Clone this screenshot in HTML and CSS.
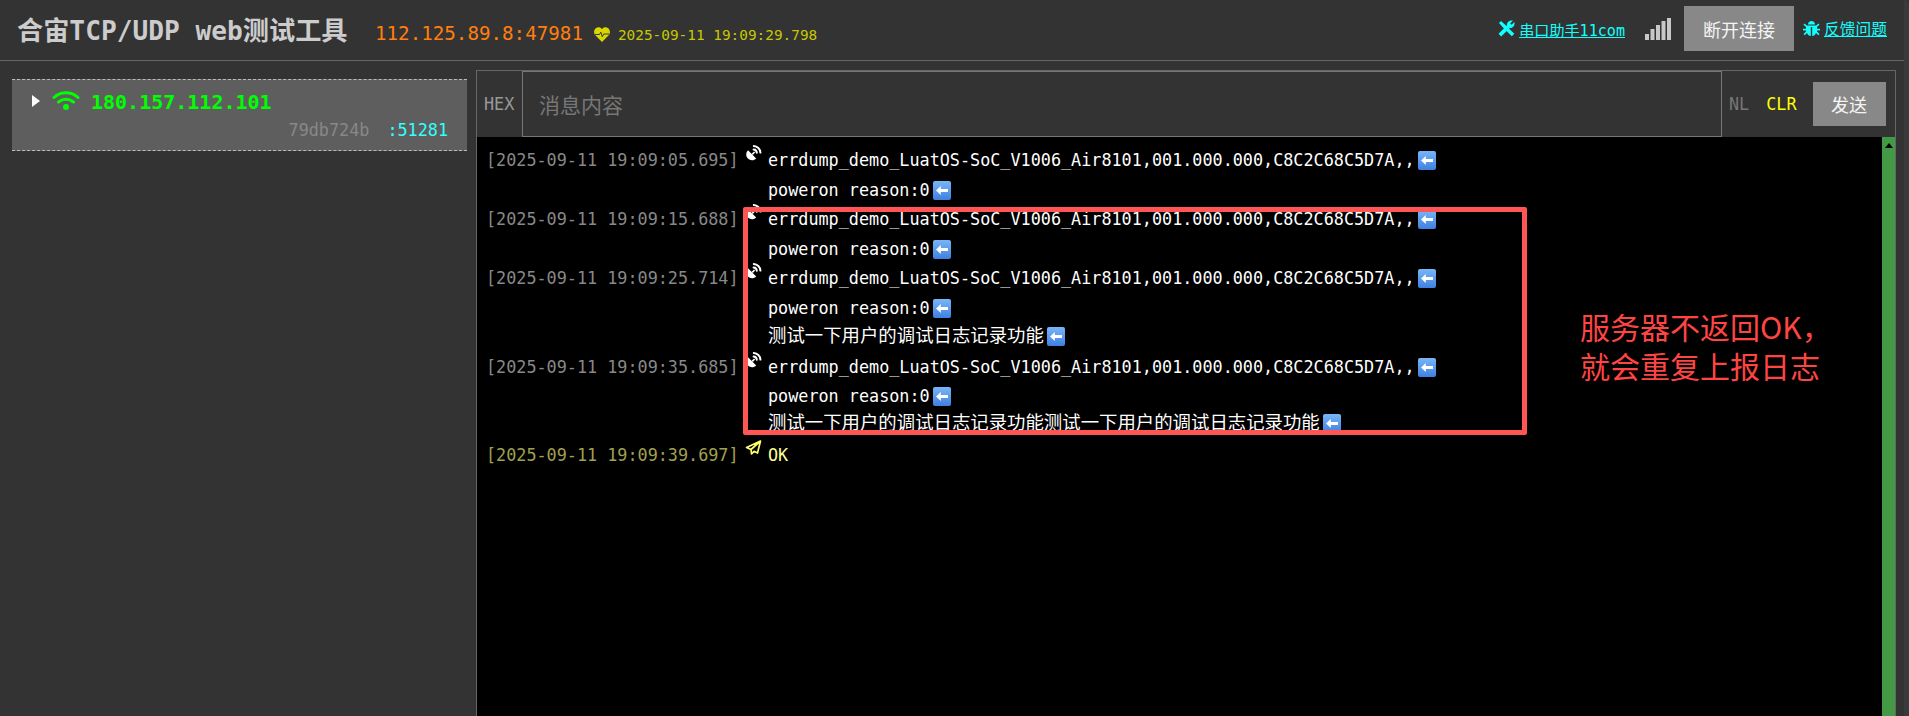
FILE: index.html
```html
<!DOCTYPE html>
<html lang="zh-CN">
<head>
<meta charset="utf-8">
<title>合宙TCP/UDP web测试工具</title>
<link rel="stylesheet" href="styles.css">
</head>
<body>
<svg class="defs" width="0" height="0" aria-hidden="true">
  <defs>
    <symbol id="dish" viewBox="0 0 17 16">
      <path d="M3 5.2 11.2 13.4C9 15.6 5.4 15.8 3 13.6.6 11.3.7 7.500 3 5.2Z" fill="currentColor"/>
      <path d="M7.200 9.400 9.600 7" stroke="currentColor" stroke-width="1.600" fill="none"/>
      <path d="M8.600 4.500C10.200 4.600 11.700 6 11.800 7.700M8.800 1C12.300 1.200 15.200 4 15.400 7.600" stroke="currentColor" stroke-width="2" fill="none" stroke-linecap="round"/>
    </symbol>
    <symbol id="back" viewBox="0 0 18 19">
      <defs>
        <linearGradient id="blue" x1="0" y1="0" x2="0" y2="1">
          <stop offset="0" stop-color="#78b6f7"/>
          <stop offset="1" stop-color="#3f80e2"/>
        </linearGradient>
      </defs>
      <rect width="18" height="19" rx="2" fill="url(#blue)"/>
      <path d="M3 9.500 7.800 5V8H15V11H7.800V14Z" fill="#fff"/>
    </symbol>
  </defs>
</svg>
<div class="app">
  <header class="topbar">
    <h1 class="title">合宙TCP/UDP web测试工具</h1>
    <span class="peer">112.125.89.8:47981</span>
    <svg class="heart" viewBox="0 0 16 15"><path d="M8 15 1.300 8.300C-.6 6.200-.2 2.800 1.800 1.300 3.900-.3 6.500.2 8 2.200 9.500.2 12.100-.3 14.200 1.300 16.200 2.800 16.600 6.200 14.700 8.300Z" fill="#d8d800"/><path d="M1 7.500H5.500L6.800 5 8.300 9.800 9.600 7H15" stroke="#3a3a3a" stroke-width="1" fill="none"/></svg>
    <span class="beat">2025-09-11 19:09:29.798</span>
    <nav class="tools">
      <svg class="tool-icon wrench" viewBox="0 0 17 17"><path d="M1 3 3 1 8.500 6 11 8.500 16.300 13.800 13.800 16.300 8.500 11 6 8.500Z" fill="currentColor"/><path d="M.5 13.800 9 5.300C8.500 2.400 11.500-.2 15 .6L12.200 3.400 13.600 4.800 16.400 2C17.200 5.500 14.500 8.500 11.700 8L3.200 16.500Z" fill="currentColor"/></svg>
      <a class="link" href="#">串口助手11com</a>
      <svg class="signal" viewBox="0 0 26 22"><rect x="0" y="16" width="4" height="6"/><rect x="5.500" y="11" width="4" height="11"/><rect x="11" y="7" width="4" height="15"/><rect x="16.500" y="3" width="4" height="19"/><rect x="22" y="0" width="4" height="22"/></svg>
      <button class="btn btn-disconnect">断开连接</button>
      <svg class="tool-icon bug" viewBox="0 0 17 17"><path d="M5 4.500C5 2.500 6.500 1 8.500 1S12 2.500 12 4.500ZM3.800 5.500H13.200L15.500 3.500 16.500 4.700 14 7V8.800H17V10.400H14V11.500L16.500 14 15.300 15.200 13 13C12.300 14.800 10.800 16 9.200 16V7H7.800V16C6.200 16 4.700 14.800 4 13L1.700 15.200.5 14 3 11.500V10.400H0V8.800H3V7L.5 4.700 1.500 3.500Z" fill="currentColor"/></svg>
      <a class="link link-wide" href="#">反馈问题</a>
    </nav>
  </header>
  <main class="workspace">
    <aside class="clients">
      <div class="client">
        <div class="client-head">
          <span class="caret"></span>
          <svg class="wifi" viewBox="0 0 28 19"><path d="M2 6.500C9 .2 19 .2 26 6.500M6.500 11C11 7.200 17 7.200 21.500 11" stroke="#0f0" stroke-width="3" fill="none" stroke-linecap="round"/><circle cx="14" cy="16" r="3" fill="#0f0"/></svg>
          <span class="client-ip">180.157.112.101</span>
        </div>
        <div class="client-meta">
          <span class="client-id">79db724b</span>
          <span class="client-port">:51281</span>
        </div>
      </div>
    </aside>
    <section class="console">
      <div class="sendbar">
        <span class="hex">HEX</span>
        <div class="msg-input">消息内容</div>
        <span class="nl">NL</span>
        <span class="clr">CLR</span>
        <button class="btn btn-send">发送</button>
      </div>
      <div class="terminal">
        <div class="log">
          <div class="row">
            <span class="time">[2025-09-11 19:09:05.695]</span>
            <svg class="kind"><use href="#dish"/></svg>
            <div class="msg">
              <div class="line">errdump_demo_LuatOS-SoC_V1006_Air8101,001.000.000,C8C2C68C5D7A,,<svg class="ret"><use href="#back"/></svg></div>
              <div class="line">poweron reason:0<svg class="ret"><use href="#back"/></svg></div>
            </div>
          </div>
          <div class="row">
            <span class="time">[2025-09-11 19:09:15.688]</span>
            <svg class="kind"><use href="#dish"/></svg>
            <div class="msg">
              <div class="line">errdump_demo_LuatOS-SoC_V1006_Air8101,001.000.000,C8C2C68C5D7A,,<svg class="ret"><use href="#back"/></svg></div>
              <div class="line">poweron reason:0<svg class="ret"><use href="#back"/></svg></div>
            </div>
          </div>
          <div class="row">
            <span class="time">[2025-09-11 19:09:25.714]</span>
            <svg class="kind"><use href="#dish"/></svg>
            <div class="msg">
              <div class="line">errdump_demo_LuatOS-SoC_V1006_Air8101,001.000.000,C8C2C68C5D7A,,<svg class="ret"><use href="#back"/></svg></div>
              <div class="line">poweron reason:0<svg class="ret"><use href="#back"/></svg></div>
              <div class="line line-cn">测试一下用户的调试日志记录功能<svg class="ret"><use href="#back"/></svg></div>
            </div>
          </div>
          <div class="row">
            <span class="time">[2025-09-11 19:09:35.685]</span>
            <svg class="kind"><use href="#dish"/></svg>
            <div class="msg">
              <div class="line">errdump_demo_LuatOS-SoC_V1006_Air8101,001.000.000,C8C2C68C5D7A,,<svg class="ret"><use href="#back"/></svg></div>
              <div class="line">poweron reason:0<svg class="ret"><use href="#back"/></svg></div>
              <div class="line line-cn line-last">测试一下用户的调试日志记录功能测试一下用户的调试日志记录功能<svg class="ret"><use href="#back"/></svg></div>
            </div>
          </div>
          <div class="row row-sent">
            <span class="time">[2025-09-11 19:09:39.697]</span>
            <svg class="kind" viewBox="0 0 17 16"><path d="M15.500 1 1.500 7.500 6 9.500 6.500 14 9 11.300 12.500 13ZM15.500 1 6 9.500" stroke="currentColor" stroke-width="1.700" fill="none" stroke-linejoin="round"/></svg>
            <div class="msg">
              <div class="line">OK</div>
            </div>
          </div>
        </div>
        <div class="scrollbar"><span class="scroll-up"></span></div>
        <div class="mark"></div>
        <div class="note">服务器不返回OK，<br>就会重复上报日志</div>
      </div>
    </section>
  </main>
  <div class="page-edge"></div>
</div>
</body>
</html>
```

FILE: styles.css
```css
* { box-sizing: border-box; }

html, body { margin: 0; height: 100%; overflow: hidden; }

body {
  background: #333;
  color: #ccc;
  font-family: "DejaVu Sans Mono", "Noto Sans CJK SC", monospace;
  font-size: 16.8px;
}

.defs { position: absolute; }

.app {
  display: grid;
  grid-template-columns: 1904px 5px;
  grid-template-rows: 61px 655px;
  height: 716px;
}

.topbar {
  grid-column: 1;
  display: flex;
  align-items: center;
  padding: 0 17px 3px 17px;
  border-bottom: 1px solid #666;
}

.title {
  margin: 0;
  width: 358px;
  font-size: 26.2px;
  font-weight: bold;
  color: #ccc;
  white-space: nowrap;
}

.peer {
  margin-top: 10px;
  font-size: 19.2px;
  color: #ff7f0e;
}

.heart {
  width: 16px;
  height: 15px;
  margin: 12px 8px 0 11px;
}

.beat {
  margin-top: 12px;
  font-size: 14.4px;
  color: #c8c800;
}

.tools {
  display: flex;
  align-items: center;
  margin-left: auto;
  color: #1ff;
}

.tool-icon {
  width: 17px;
  height: 17px;
  margin-right: 4px;
}

.link {
  color: #1ff;
  font-size: 15.1px;
}

.link-wide { font-size: 15.75px; }

.signal {
  width: 26px;
  height: 22px;
  margin: 0 13px 0 20px;
  fill: #c8c8c8;
}

.btn {
  border: 0;
  padding: 0;
  background: #888;
  color: #f4f4f4;
  font-family: "Noto Sans CJK SC", sans-serif;
  font-size: 18px;
}

.btn-disconnect {
  width: 110px;
  height: 45px;
  margin-right: 9px;
}

.workspace {
  grid-column: 1;
  display: flex;
  min-height: 0;
}

.clients {
  width: 476px;
  padding: 18px 9px 0 12px;
}

.client {
  height: 72px;
  padding: 9px 19px 0 20px;
  background: #5e5e5e;
  border-top: 1px dashed #bbb;
  border-bottom: 1px dashed #bbb;
}

.client-head {
  display: flex;
  align-items: center;
  height: 26px;
}

.caret {
  width: 0;
  height: 0;
  margin: -3px 12px 0 0;
  border-top: 6.500px solid transparent;
  border-bottom: 6.500px solid transparent;
  border-left: 8px solid #fff;
}

.wifi {
  width: 28px;
  height: 19px;
  margin-right: 11px;
  margin-top: -3px;
}

.client-ip {
  font-size: 20px;
  font-weight: bold;
  color: #0f0;
}

.client-meta {
  display: flex;
  justify-content: flex-end;
  gap: 18px;
  margin-top: 4px;
  line-height: 22px;
}

.client-id { color: #888; }

.client-port { color: #3ff; }

.console {
  display: flex;
  flex-direction: column;
  width: 1420px;
  margin-top: 9px;
  border: 1px solid #666;
  border-bottom: 0;
}

.sendbar {
  display: flex;
  align-items: center;
  height: 66px;
  flex: none;
}

.hex {
  width: 45px;
  padding-left: 7px;
  color: #999;
}

.msg-input {
  width: 1200px;
  height: 66px;
  padding-left: 16px;
  border: 1px solid #777;
  background: #333;
  color: #777;
  font-family: "Noto Sans CJK SC", sans-serif;
  font-size: 21px;
  line-height: 64px;
}

.nl {
  margin-left: 7px;
  color: #777;
}

.clr {
  margin-left: 17px;
  color: #ff0;
}

.btn-send {
  width: 73px;
  height: 44px;
  margin-left: 16px;
}

.terminal {
  position: relative;
  flex: 1;
  display: flex;
  min-height: 0;
  background: #000;
}

.log {
  flex: 1;
  padding: 9px 0 0 9px;
  line-height: 29.5px;
}

.row { display: flex; }

.time {
  width: 259px;
  flex: none;
  color: #888;
  white-space: pre;
}

.kind {
  width: 17px;
  height: 16px;
  flex: none;
  margin: -1px 6px 0 0;
  color: #fff;
}

.msg { color: #fff; }

.line {
  height: 29.5px;
  white-space: pre;
}

.line-cn {
  font-size: 18.4px;
  line-height: 26px;
}

.line-last { line-height: 21px; }

.ret {
  width: 18px;
  height: 19px;
  margin-left: 3px;
  vertical-align: -4px;
}

.row-sent .time { color: #a0a050; }

.row-sent .kind { color: #ff6; }

.row-sent .msg { color: #ff9; }

.scrollbar {
  width: 13px;
  flex: none;
  padding-top: 6px;
  background: #449944;
}

.scroll-up {
  display: block;
  width: 0;
  height: 0;
  margin: 0 auto;
  border-left: 4px solid transparent;
  border-right: 4px solid transparent;
  border-bottom: 5px solid #000;
}

.mark {
  position: absolute;
  left: 266px;
  top: 70px;
  width: 784px;
  height: 228px;
  border: 5px solid #f55;
  border-radius: 2px;
}

.note {
  position: absolute;
  left: 1103px;
  top: 170px;
  color: #f44;
  font-family: "Noto Sans CJK SC", sans-serif;
  font-size: 30px;
  line-height: 39px;
  white-space: nowrap;
}

.page-edge {
  grid-column: 2;
  grid-row: 1 / span 2;
  background: #3a3a3a;
  border-top-right-radius: 8px;
}
```
